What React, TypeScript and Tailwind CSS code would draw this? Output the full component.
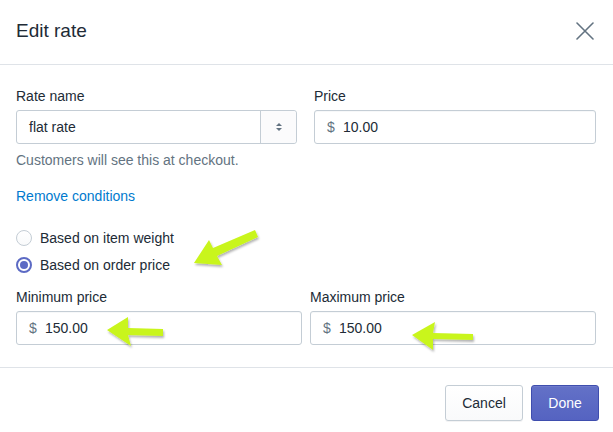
const font = { fontFamily: '"Liberation Sans", Arial, sans-serif' };

const Radio = ({ checked, label }: { checked?: boolean; label: string }) => (
  <label className="flex items-center h-5 gap-2 text-sm text-[#212b36]">
    <span
      className={`flex items-center justify-center w-4 h-4 rounded-full border shrink-0 ${
        checked ? 'border-[#5c6ac4] border-2 bg-white' : 'border-[#c4cdd5] bg-gradient-to-b from-white to-[#f9fafb]'
      }`}
    >
      {checked && <span className="w-2 h-2 rounded-full bg-[#5c6ac4]" />}
    </span>
    <span>{label}</span>
  </label>
);

const MoneyField = ({ label, value }: { label: string; value: string }) => (
  <div className="flex flex-col gap-1">
    <span className="text-sm leading-5 text-[#212b36]">{label}</span>
    <div className="flex items-center h-[34px] rounded-[3px] border border-[#c4cdd5] bg-white pl-3 text-sm shadow-[inset_0_1px_0_rgba(99,115,129,0.05)]">
      <span className="text-[#637381] w-[16px]">$</span>
      <span className="text-[#212b36]">{value}</span>
    </div>
  </div>
);

const Arrows = () => (
  <svg className="absolute inset-0 pointer-events-none" width="613" height="432" viewBox="0 0 613 432">
    <defs>
      <filter id="sh" x="-20%" y="-20%" width="140%" height="140%">
        <feDropShadow dx="1" dy="2" stdDeviation="1.2" floodColor="#000" floodOpacity="0.3" />
      </filter>
    </defs>
    <g fill="#c9f51f" filter="url(#sh)">
      <polygon points="194,263 209,240 213,248 255,230 258,237 217,256 222,265" />
      <polygon points="107,330 128,317 128,328 163,329 163,336 128,335 131,346" />
      <polygon points="412,335 435,322 433,333 473,334 473,340 433,339 433,350" />
    </g>
  </svg>
);

export default function App() {
  return (
    <div className="relative w-[613px] h-[432px] overflow-hidden bg-white text-[#212b36]" style={font}>
      <div className="flex items-center justify-between h-[65px] pl-4 pr-[19px] border-b border-[#dfe3e8]">
        <h1 className="text-[19px] leading-6 -mt-[3px]">Edit rate</h1>
        <svg width="18" height="18" viewBox="0 0 18 18" className="-mt-[3px]" stroke="#637381" strokeWidth="1.6" strokeLinecap="round">
          <path d="M1 1 L17 17 M17 1 L1 17" />
        </svg>
      </div>

      <div className="pl-4 pr-[17px] pt-[21px] pb-[22px] border-b border-[#dfe3e8]">
        <div className="grid grid-cols-[281px_282px] gap-x-[17px]">
          <div className="flex flex-col gap-1">
            <span className="text-sm leading-5">Rate name</span>
            <div className="flex h-[34px] rounded-[3px] border border-[#c4cdd5] bg-white text-sm">
              <div className="flex-1 flex items-center pl-3">flat rate</div>
              <div className="w-9 flex items-center justify-center border-l border-[#c4cdd5] bg-[#fbfbfc] rounded-r-[3px]">
                <svg width="8" height="10" viewBox="0 0 8 10" fill="#637381">
                  <path d="M4 1 L7 4 H1 Z" />
                  <path d="M4 9 L7 6 H1 Z" />
                </svg>
              </div>
            </div>
            <span className="text-sm leading-5 text-[#637381] mt-[2px]">Customers will see this at checkout.</span>
          </div>
          <MoneyField label="Price" value="10.00" />
        </div>

        <div className="mt-4 text-sm leading-5 text-[#007ace]">Remove conditions</div>

        <div className="mt-[22px] flex flex-col gap-[7px]">
          <Radio label="Based on item weight" />
          <Radio label="Based on order price" checked />
        </div>

        <div className="mt-3 grid grid-cols-2 gap-x-2">
          <MoneyField label="Minimum price" value="150.00" />
          <MoneyField label="Maximum price" value="150.00" />
        </div>
      </div>

      <div className="flex justify-end gap-2 pt-[17px] pr-[14px]">
        <button className="h-9 w-[78px] rounded-[3px] border border-[#c4cdd5] bg-gradient-to-b from-white to-[#f9fafb] text-sm text-[#212b36] shadow-[0_1px_0_rgba(22,29,37,0.05)]">
          Cancel
        </button>
        <button className="h-9 w-[68px] rounded-[3px] border border-[#3f4eae] bg-gradient-to-b from-[#6371c7] to-[#5563c1] text-sm text-white shadow-[inset_0_1px_0_#6f7bcb]">
          Done
        </button>
      </div>

      <Arrows />
    </div>
  );
}
